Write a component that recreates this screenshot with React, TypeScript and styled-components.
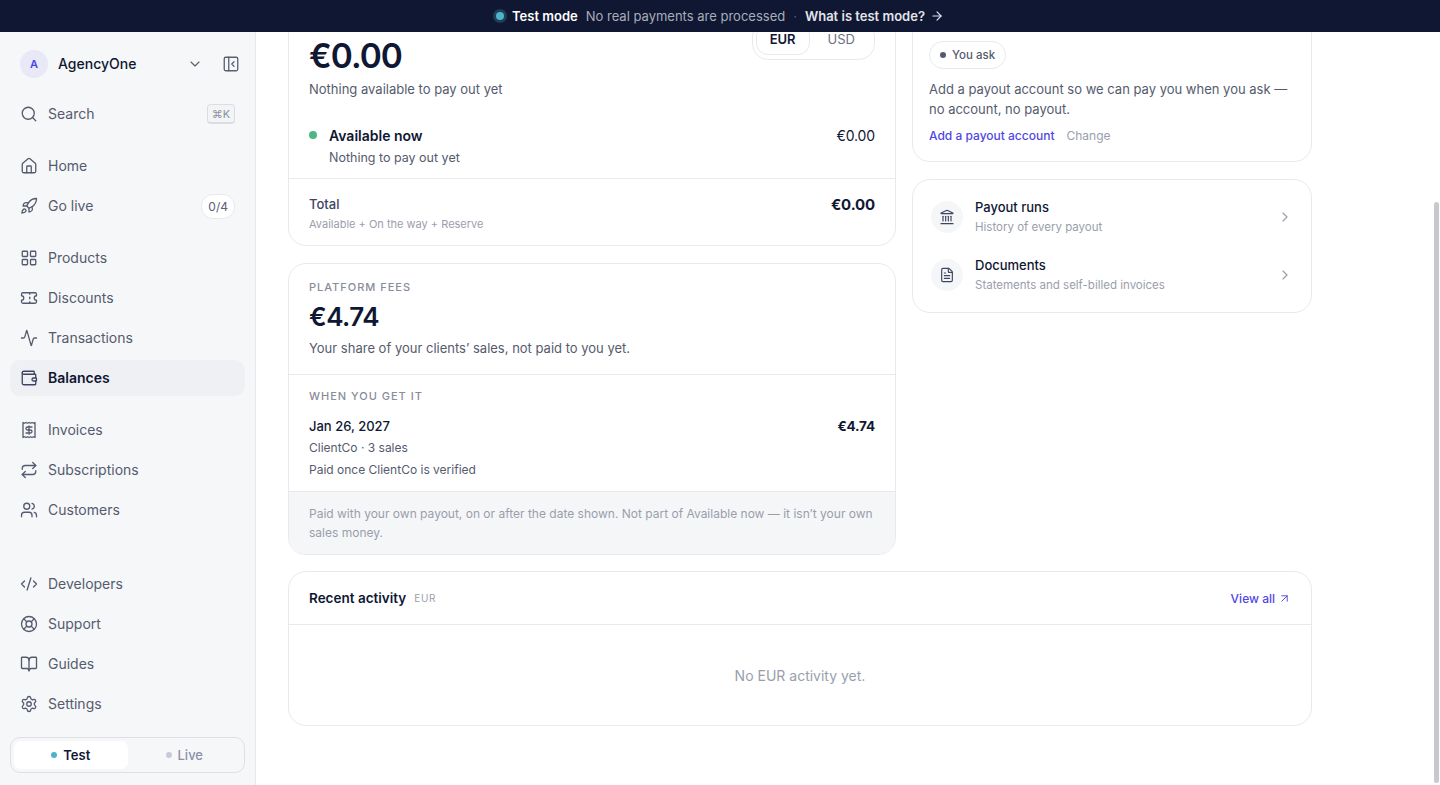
import { useLayoutEffect, useRef } from 'react';
import styled, { createGlobalStyle } from 'styled-components';
import {
  Activity,
  ArrowRight,
  ArrowUpRight,
  BookOpen,
  ChevronDown,
  ChevronRight,
  CodeXml,
  FileText,
  House,
  Landmark,
  LayoutGrid,
  LifeBuoy,
  PanelLeftClose,
  Repeat,
  Rocket,
  Search,
  Settings,
  Ticket,
  Users,
  Wallet,
} from 'lucide-react';

const INK = '#0f1733';
const BODY = '#555b6e';
const MUTED = '#9a9eac';
const LINE = '#e8e9ed';
const ACCENT = '#4f46e5';
const ICON_STROKE = 1.75;

const GlobalStyle = createGlobalStyle`
  html, body, #root {
    margin: 0;
    height: 100%;
    overflow: hidden;
  }
  * {
    box-sizing: border-box;
  }
  body {
    font-family: Inter, "Liberation Sans", sans-serif;
    color: ${INK};
    background: #fff;
  }
`;

const Page = styled.div`
  display: flex;
  flex-direction: column;
  height: 785px;
`;

const Banner = styled.div`
  position: relative;
  z-index: 2;
  flex: 0 0 32px;
  display: flex;
  align-items: center;
  justify-content: center;
  gap: 8px;
  background: #0f1733;
  font-size: 13px;
  color: #a9adb9;
`;

const BannerDot = styled.span`
  width: 8px;
  height: 8px;
  border-radius: 50%;
  background: #4fb3c8;
  box-shadow: 0 0 0 3px rgba(79, 179, 200, 0.25);
`;

const BannerStrong = styled.strong`
  color: #fff;
  font-weight: 600;
`;

const BannerSep = styled.span`
  color: #5a6075;
`;

const BannerLink = styled.span`
  display: inline-flex;
  align-items: center;
  gap: 5px;
  color: #e3e4e9;
  font-weight: 600;
`;

const Body = styled.div`
  flex: 1;
  display: flex;
  min-height: 0;
`;

const Sidebar = styled.aside`
  flex: 0 0 256px;
  display: flex;
  flex-direction: column;
  padding: 0 10px;
  background: #f6f7f9;
  border-right: 1px solid ${LINE};
`;

const Account = styled.div`
  height: 64px;
  display: flex;
  align-items: center;
  padding: 0 5px 0 10px;
`;

const Avatar = styled.span`
  width: 28px;
  height: 28px;
  display: flex;
  align-items: center;
  justify-content: center;
  border-radius: 50%;
  background: #e8e8f6;
  color: ${ACCENT};
  font-size: 11px;
  font-weight: 600;
`;

const AccountName = styled.span`
  flex: 1;
  margin-left: 10px;
  padding-bottom: 1px;
  font-size: 14px;
  font-weight: 500;
`;

const Collapse = styled.span`
  display: flex;
  margin-left: 19px;
  color: #5a6075;
`;

const NavGroup = styled.nav<{ $gap?: number }>`
  display: flex;
  flex-direction: column;
  gap: 4px;
  margin-top: ${(p) => p.$gap ?? 0}px;
`;

const NavItem = styled.div<{ $active?: boolean }>`
  height: 36px;
  display: flex;
  align-items: center;
  gap: 10px;
  padding: 0 10px;
  border-radius: 10px;
  font-size: 14px;
  font-weight: ${(p) => (p.$active ? 600 : 400)};
  color: ${(p) => (p.$active ? INK : BODY)};
  background: ${(p) => (p.$active ? '#eff0f4' : 'transparent')};
  svg {
    flex: none;
    color: ${(p) => (p.$active ? '#3f4560' : BODY)};
  }
`;

const NavLabel = styled.span`
  flex: 1;
  padding-bottom: 2px;
`;

const Kbd = styled.span`
  width: 28px;
  height: 20px;
  display: flex;
  align-items: center;
  justify-content: center;
  border: 1px solid #dcdde3;
  border-bottom-width: 2px;
  border-radius: 4px;
  font-size: 11px;
  color: #8d91a1;
  background: #f3f4f6;
`;

const Count = styled.span`
  padding: 4px 6px;
  border: 1px solid ${LINE};
  border-radius: 12px;
  background: #fff;
  font-size: 12px;
  color: #5a6075;
`;

const ModeSwitch = styled.div`
  display: grid;
  grid-template-columns: 1fr 1fr;
  height: 36px;
  margin-top: auto;
  margin-bottom: 12px;
  padding: 3px;
  border: 1px solid #dfe0e6;
  border-radius: 10px;
`;

const ModeOption = styled.span<{ $on?: boolean }>`
  display: flex;
  align-items: center;
  justify-content: center;
  gap: 6px;
  border-radius: 7px;
  font-size: 13px;
  font-weight: ${(p) => (p.$on ? 600 : 500)};
  color: ${(p) => (p.$on ? INK : '#8d91a8')};
  background: ${(p) => (p.$on ? '#fff' : 'transparent')};
`;

const ModeDot = styled.span<{ $color: string }>`
  width: 6px;
  height: 6px;
  border-radius: 50%;
  background: ${(p) => p.$color};
`;

const MainWrap = styled.div`
  position: relative;
  flex: 1;
  min-width: 0;
`;

const Main = styled.main`
  height: 100%;
  overflow-y: scroll;
  scrollbar-width: none;
  &::-webkit-scrollbar {
    display: none;
  }
`;

const ScrollThumb = styled.div`
  position: absolute;
  top: 170px;
  right: 1px;
  width: 5px;
  height: 581px;
  border-radius: 3px;
  background: #c8c9cf;
`;

const Content = styled.div`
  width: 1024px;
  margin-left: 32px;
  padding: 191px 0 62px;
`;

const Columns = styled.div`
  display: grid;
  grid-template-columns: 608px 400px;
  gap: 16px;
  align-items: start;
`;

const Stack = styled.div`
  display: flex;
  flex-direction: column;
  gap: 17px;
`;

const Card = styled.section`
  border: 1px solid ${LINE};
  border-radius: 18px;
  background: #fff;
  overflow: hidden;
`;

const Section = styled.div<{ $pad: string; $tint?: boolean }>`
  padding: ${(p) => p.$pad};
  background: ${(p) => (p.$tint ? '#f5f6f8' : 'transparent')};
  & + & {
    border-top: 1px solid ${LINE};
  }
`;

const SplitRow = styled.div`
  display: flex;
  justify-content: space-between;
  align-items: flex-start;
`;

const Eyebrow = styled.div`
  font-size: 11px;
  line-height: 16px;
  font-weight: 500;
  letter-spacing: 0.09em;
  color: #888c9b;
`;

const BigAmount = styled.div`
  margin-top: 14px;
  font-size: 33.5px;
  line-height: 44px;
  font-weight: 600;
  letter-spacing: -0.03em;
`;

const MidAmount = styled.div`
  margin-top: 4px;
  font-size: 26px;
  line-height: 36px;
  font-weight: 600;
  letter-spacing: -0.02em;
`;

const Note = styled.p<{ $top: number }>`
  margin: ${(p) => p.$top}px 0 0;
  font-size: 13px;
  line-height: 20px;
  color: ${BODY};
`;

const SmallNote = styled.div<{ $top?: number; $size?: number }>`
  margin-top: ${(p) => p.$top ?? 3}px;
  font-size: ${(p) => p.$size ?? 12}px;
  line-height: 18px;
  color: ${BODY};
`;

const FootNote = styled.div`
  font-size: 12px;
  line-height: 19px;
  color: ${MUTED};
`;

const TotalHint = styled.div`
  margin-top: 1px;
  font-size: 11px;
  line-height: 16px;
  color: ${MUTED};
`;

const Segmented = styled.div`
  display: flex;
  gap: 3px;
  height: 40px;
  padding: 2px 4px 4px 3px;
  border: 1px solid ${LINE};
  border-radius: 16px;
`;

const Segment = styled.span<{ $on?: boolean }>`
  display: flex;
  align-items: center;
  padding: 0 ${(p) => (p.$on ? 13 : 14)}px;
  border-radius: 12px;
  font-size: 13px;
  font-weight: ${(p) => (p.$on ? 600 : 400)};
  color: ${(p) => (p.$on ? INK : '#6b7082')};
  border: 1px solid ${(p) => (p.$on ? LINE : 'transparent')};
`;

const BalanceRow = styled.div`
  display: grid;
  grid-template-columns: 20px 1fr auto;
  margin-top: 27px;
`;

const GreenDot = styled.span`
  width: 8px;
  height: 8px;
  margin-top: 5px;
  border-radius: 50%;
  background: #4cb782;
`;

const RowTitle = styled.div`
  font-size: 14px;
  line-height: 20px;
  font-weight: 600;
`;

const Money = styled.span<{ $bold?: boolean; $size?: number }>`
  font-size: ${(p) => p.$size ?? 14}px;
  line-height: 20px;
  font-weight: ${(p) => (p.$bold ? 700 : 400)};
  letter-spacing: -0.01em;
`;

const TotalLabel = styled.div`
  font-size: 13px;
  line-height: 18px;
  font-weight: 500;
  color: #3f4560;
`;

const Pill = styled.span`
  display: inline-flex;
  align-items: center;
  gap: 6px;
  height: 28px;
  padding: 0 10px;
  border: 1px solid ${LINE};
  border-radius: 14px;
  font-size: 11.5px;
  font-weight: 500;
  color: ${BODY};
`;

const PillDot = styled.span`
  width: 6px;
  height: 6px;
  border-radius: 50%;
  background: ${BODY};
`;

const PayoutText = styled.p`
  margin: 10px 0 0;
  font-size: 13px;
  line-height: 20px;
  color: ${BODY};
`;

const LinkRow = styled.div`
  display: flex;
  gap: 12px;
  margin-top: 7px;
  font-size: 12px;
  line-height: 20px;
`;

const AccentLink = styled.span`
  display: inline-flex;
  align-items: center;
  gap: 3px;
  font-size: 12px;
  color: ${ACCENT};
  font-weight: 500;
`;

const MutedLink = styled.span`
  color: ${MUTED};
`;

const LinkList = styled.div`
  display: flex;
  flex-direction: column;
  gap: 26px;
  padding: 21px 18px;
`;

const LinkItem = styled.div`
  display: flex;
  align-items: center;
  gap: 12px;
  height: 32px;
  color: ${MUTED};
`;

const LinkIcon = styled.span`
  flex: none;
  width: 32px;
  height: 32px;
  display: flex;
  align-items: center;
  justify-content: center;
  border-radius: 50%;
  background: #f5f6f8;
  color: #3f4560;
`;

const LinkText = styled.div`
  flex: 1;
`;

const LinkTitle = styled.div`
  font-size: 13px;
  line-height: 19px;
  font-weight: 500;
  color: ${INK};
`;

const LinkSub = styled.div`
  margin-top: 1px;
  font-size: 11.5px;
  line-height: 19px;
  color: ${MUTED};
`;

const DateRow = styled(SplitRow)`
  margin-top: 12px;
`;

const DateTitle = styled.div`
  font-size: 13px;
  line-height: 20px;
  font-weight: 500;
`;

const ActivityCard = styled(Card)`
  margin-top: 16px;
`;

const ActivityHead = styled.div`
  height: 53px;
  display: flex;
  align-items: center;
  padding: 0 20px;
  border-bottom: 1px solid ${LINE};
`;

const ActivityTitle = styled.span`
  font-size: 13.5px;
  font-weight: 600;
`;

const Tag = styled.span`
  flex: 1;
  margin-left: 8px;
  font-size: 10px;
  letter-spacing: 0.06em;
  color: ${MUTED};
`;

const Empty = styled.div`
  height: 100px;
  display: flex;
  align-items: center;
  justify-content: center;
  font-size: 14px;
  color: ${MUTED};
`;

const InvoiceIcon = () => (
  <svg width="18" height="18" viewBox="0 0 24 24" fill="none" stroke="currentColor" strokeWidth={ICON_STROKE} strokeLinecap="round" strokeLinejoin="round">
    <path d="M4 2v20l2-1 2 1 2-1 2 1 2-1 2 1 2-1 2 1V2l-2 1-2-1-2 1-2-1-2 1-2-1-2 1Z" />
    <path d="M16 8h-6a2 2 0 1 0 0 4h4a2 2 0 1 1 0 4H8" />
    <path d="M12 17.5v-11" />
  </svg>
);

export default function App() {
  const scroller = useRef<HTMLElement>(null);

  useLayoutEffect(() => {
    if (scroller.current) scroller.current.scrollTop = 220;
  }, []);

  return (
    <Page>
      <GlobalStyle />
      <Banner>
        <BannerDot />
        <BannerStrong>Test mode</BannerStrong>
        <span>No real payments are processed</span>
        <BannerSep>·</BannerSep>
        <BannerLink>
          What is test mode? <ArrowRight size={14} />
        </BannerLink>
      </Banner>
      <Body>
        <Sidebar>
          <Account>
            <Avatar>A</Avatar>
            <AccountName>AgencyOne</AccountName>
            <ChevronDown size={16} color="#5a6075" strokeWidth={ICON_STROKE} />
            <Collapse>
              <PanelLeftClose size={18} strokeWidth={ICON_STROKE} />
            </Collapse>
          </Account>
          <NavItem>
            <Search size={18} strokeWidth={ICON_STROKE} />
            <NavLabel>Search</NavLabel>
            <Kbd>⌘K</Kbd>
          </NavItem>
          <NavGroup $gap={16}>
            <NavItem>
              <House size={18} strokeWidth={ICON_STROKE} />
              <NavLabel>Home</NavLabel>
            </NavItem>
            <NavItem>
              <Rocket size={18} strokeWidth={ICON_STROKE} />
              <NavLabel>Go live</NavLabel>
              <Count>0/4</Count>
            </NavItem>
          </NavGroup>
          <NavGroup $gap={16}>
            <NavItem>
              <LayoutGrid size={18} strokeWidth={ICON_STROKE} />
              <NavLabel>Products</NavLabel>
            </NavItem>
            <NavItem>
              <Ticket size={18} strokeWidth={ICON_STROKE} />
              <NavLabel>Discounts</NavLabel>
            </NavItem>
            <NavItem>
              <Activity size={18} strokeWidth={ICON_STROKE} />
              <NavLabel>Transactions</NavLabel>
            </NavItem>
            <NavItem $active>
              <Wallet size={18} strokeWidth={ICON_STROKE} />
              <NavLabel>Balances</NavLabel>
            </NavItem>
          </NavGroup>
          <NavGroup $gap={16}>
            <NavItem>
              <InvoiceIcon />
              <NavLabel>Invoices</NavLabel>
            </NavItem>
            <NavItem>
              <Repeat size={18} strokeWidth={ICON_STROKE} />
              <NavLabel>Subscriptions</NavLabel>
            </NavItem>
            <NavItem>
              <Users size={18} strokeWidth={ICON_STROKE} />
              <NavLabel>Customers</NavLabel>
            </NavItem>
          </NavGroup>
          <NavGroup $gap={38}>
            <NavItem>
              <CodeXml size={18} strokeWidth={ICON_STROKE} />
              <NavLabel>Developers</NavLabel>
            </NavItem>
            <NavItem>
              <LifeBuoy size={18} strokeWidth={ICON_STROKE} />
              <NavLabel>Support</NavLabel>
            </NavItem>
            <NavItem>
              <BookOpen size={18} strokeWidth={ICON_STROKE} />
              <NavLabel>Guides</NavLabel>
            </NavItem>
            <NavItem>
              <Settings size={18} strokeWidth={ICON_STROKE} />
              <NavLabel>Settings</NavLabel>
            </NavItem>
          </NavGroup>
          <ModeSwitch>
            <ModeOption $on>
              <ModeDot $color="#4fb3c8" />
              Test
            </ModeOption>
            <ModeOption>
              <ModeDot $color="#c9cad6" />
              Live
            </ModeOption>
          </ModeSwitch>
        </Sidebar>
        <MainWrap>
          <Main ref={scroller}>
            <Content>
              <Columns>
                <Stack>
                  <Card>
                    <Section $pad="16px 20px 11px">
                      <SplitRow>
                        <BigAmount>€0.00</BigAmount>
                        <Segmented>
                          <Segment $on>EUR</Segment>
                          <Segment>USD</Segment>
                        </Segmented>
                      </SplitRow>
                      <Note $top={1}>Nothing available to pay out yet</Note>
                      <BalanceRow>
                        <GreenDot />
                        <div>
                          <RowTitle>Available now</RowTitle>
                          <SmallNote $size={12.5}>Nothing to pay out yet</SmallNote>
                        </div>
                        <Money>€0.00</Money>
                      </BalanceRow>
                    </Section>
                    <Section $pad="16px 20px 13px">
                      <SplitRow>
                        <TotalLabel>Total</TotalLabel>
                        <Money $bold $size={15}>
                          €0.00
                        </Money>
                      </SplitRow>
                      <TotalHint>Available + On the way + Reserve</TotalHint>
                    </Section>
                  </Card>
                  <Card>
                    <Section $pad="15px 20px 16px">
                      <Eyebrow>PLATFORM FEES</Eyebrow>
                      <MidAmount>€4.74</MidAmount>
                      <Note $top={3}>Your share of your clients’ sales, not paid to you yet.</Note>
                    </Section>
                    <Section $pad="13px 20px 12px">
                      <Eyebrow>WHEN YOU GET IT</Eyebrow>
                      <DateRow>
                        <DateTitle>Jan 26, 2027</DateTitle>
                        <Money $bold $size={13.5}>
                          €4.74
                        </Money>
                      </DateRow>
                      <SmallNote>ClientCo · 3 sales</SmallNote>
                      <SmallNote $top={4}>Paid once ClientCo is verified</SmallNote>
                    </Section>
                    <Section $pad="12px 20px" $tint>
                      <FootNote>
                        Paid with your own payout, on or after the date shown. Not part of Available now — it isn’t your own
                        sales money.
                      </FootNote>
                    </Section>
                  </Card>
                </Stack>
                <Stack>
                  <Card>
                    <Section $pad="37px 16px 15px">
                      <Pill>
                        <PillDot />
                        You ask
                      </Pill>
                      <PayoutText>Add a payout account so we can pay you when you ask — no account, no payout.</PayoutText>
                      <LinkRow>
                        <AccentLink>Add a payout account</AccentLink>
                        <MutedLink>Change</MutedLink>
                      </LinkRow>
                    </Section>
                  </Card>
                  <Card>
                    <LinkList>
                      <LinkItem>
                        <LinkIcon>
                          <Landmark size={16} strokeWidth={ICON_STROKE} />
                        </LinkIcon>
                        <LinkText>
                          <LinkTitle>Payout runs</LinkTitle>
                          <LinkSub>History of every payout</LinkSub>
                        </LinkText>
                        <ChevronRight size={16} strokeWidth={ICON_STROKE} />
                      </LinkItem>
                      <LinkItem>
                        <LinkIcon>
                          <FileText size={16} strokeWidth={ICON_STROKE} />
                        </LinkIcon>
                        <LinkText>
                          <LinkTitle>Documents</LinkTitle>
                          <LinkSub>Statements and self-billed invoices</LinkSub>
                        </LinkText>
                        <ChevronRight size={16} strokeWidth={ICON_STROKE} />
                      </LinkItem>
                    </LinkList>
                  </Card>
                </Stack>
              </Columns>
              <ActivityCard>
                <ActivityHead>
                  <ActivityTitle>Recent activity</ActivityTitle>
                  <Tag>EUR</Tag>
                  <AccentLink>
                    View all <ArrowUpRight size={13} strokeWidth={ICON_STROKE} />
                  </AccentLink>
                </ActivityHead>
                <Empty>No EUR activity yet.</Empty>
              </ActivityCard>
            </Content>
          </Main>
          <ScrollThumb />
        </MainWrap>
      </Body>
    </Page>
  );
}
